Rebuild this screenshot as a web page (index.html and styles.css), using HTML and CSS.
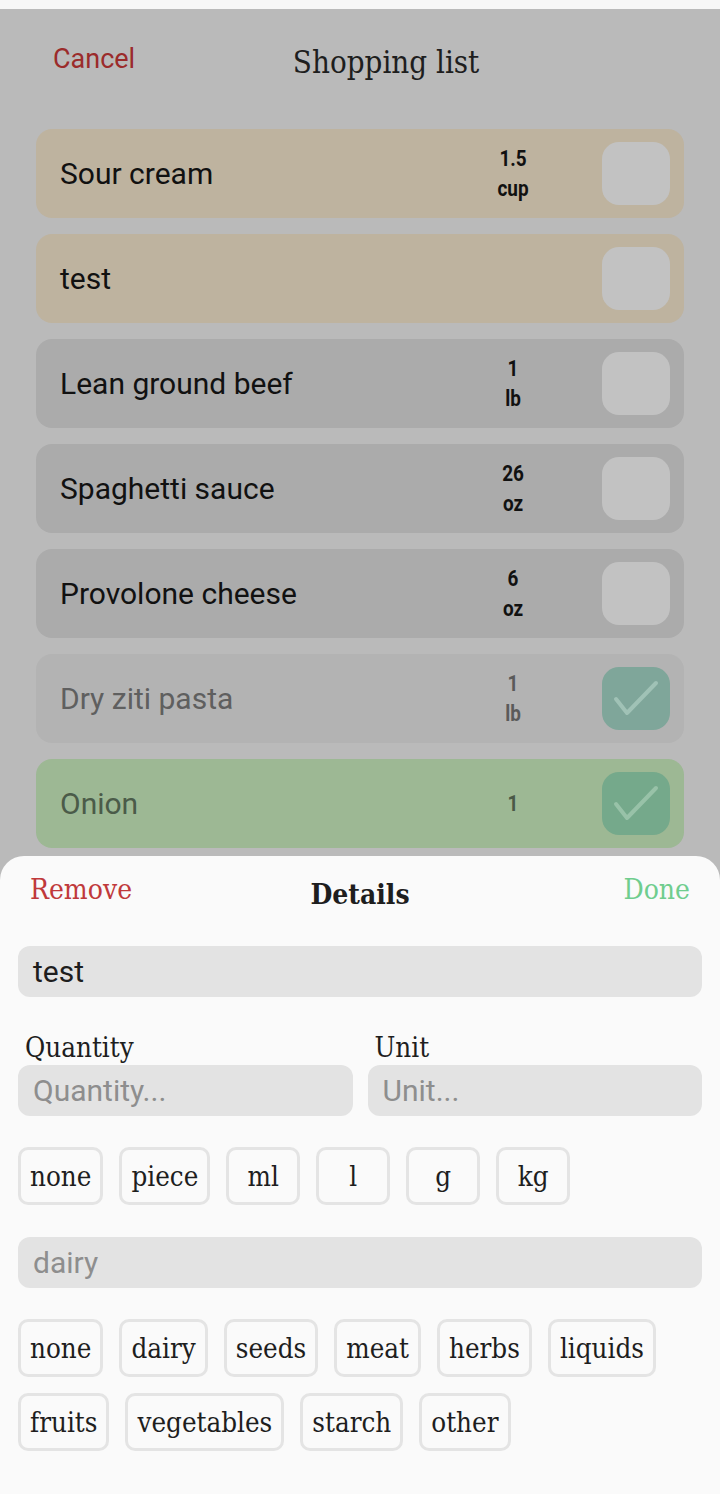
FILE: index.html
```html
<!DOCTYPE html>
<html lang="en">
<head>
<meta charset="utf-8">
<title>Shopping list</title>
<link rel="stylesheet" href="styles.css">
</head>
<body>
<div class="statusbar"></div>
<div class="screen">
  <header class="topbar">
    <span class="cancel">Cancel</span>
    <h1 class="title">Shopping list</h1>
  </header>
  <ul class="list">
    <li class="item item-beige">
      <span class="name">Sour cream</span>
      <span class="qty">1.5<br>cup</span>
      <span class="box"></span>
    </li>
    <li class="item item-beige">
      <span class="name">test</span>
      <span class="qty"></span>
      <span class="box"></span>
    </li>
    <li class="item item-gray">
      <span class="name">Lean ground beef</span>
      <span class="qty">1<br>lb</span>
      <span class="box"></span>
    </li>
    <li class="item item-gray">
      <span class="name">Spaghetti sauce</span>
      <span class="qty">26<br>oz</span>
      <span class="box"></span>
    </li>
    <li class="item item-gray">
      <span class="name">Provolone cheese</span>
      <span class="qty">6<br>oz</span>
      <span class="box"></span>
    </li>
    <li class="item item-done">
      <span class="name">Dry ziti pasta</span>
      <span class="qty">1<br>lb</span>
      <span class="box box-checked"><svg viewBox="0 0 68 63" class="check"><polyline points="14,32 25,46 54,16"/></svg></span>
    </li>
    <li class="item item-green">
      <span class="name">Onion</span>
      <span class="qty">1</span>
      <span class="box box-checked box-green"><svg viewBox="0 0 68 63" class="check"><polyline points="14,32 25,46 54,16"/></svg></span>
    </li>
  </ul>
</div>

<section class="sheet">
  <div class="sheet-head">
    <span class="remove">Remove</span>
    <h2 class="sheet-title">Details</h2>
    <span class="done">Done</span>
  </div>
  <div class="field field-name">test</div>
  <div class="pair">
    <div class="col">
      <div class="label">Quantity</div>
      <div class="field placeholder">Quantity...</div>
    </div>
    <div class="col">
      <div class="label">Unit</div>
      <div class="field placeholder">Unit...</div>
    </div>
  </div>
  <div class="chips chips-units">
    <span class="chip">none</span>
    <span class="chip">piece</span>
    <span class="chip">ml</span>
    <span class="chip">l</span>
    <span class="chip">g</span>
    <span class="chip">kg</span>
  </div>
  <div class="field placeholder field-cat">dairy</div>
  <div class="chips chips-cats">
    <span class="chip">none</span>
    <span class="chip">dairy</span>
    <span class="chip">seeds</span>
    <span class="chip">meat</span>
    <span class="chip">herbs</span>
    <span class="chip">liquids</span>
    <span class="chip">fruits</span>
    <span class="chip">vegetables</span>
    <span class="chip">starch</span>
    <span class="chip">other</span>
  </div>
</section>
</body>
</html>
```
FILE: styles.css
```css
* { box-sizing: border-box; }
html, body {
  margin: 0;
  padding: 0;
}
body {
  width: 720px;
  height: 1494px;
  background: #bababa;
  font-family: Roboto, "Liberation Sans", sans-serif;
  overflow: hidden;
  position: relative;
}
.statusbar {
  height: 9px;
  background: #f7f7f7;
}
.topbar {
  height: 120px;
  display: flex;
  align-items: flex-start;
  padding: 0 83px 0 53px;
}
.cancel {
  flex: none;
  margin-top: 35px;
  font-size: 27px;
  line-height: 30px;
  color: #9b2b2b;
}
.title {
  flex: 1;
  margin: 33px 0 0;
  text-align: center;
  font-family: "DejaVu Serif", "Liberation Serif", serif;
  font-stretch: condensed;
  font-weight: normal;
  font-size: 31px;
  line-height: 40px;
  color: #1e1e1e;
}
.list {
  list-style: none;
  margin: 0;
  padding: 0 36px;
  display: flex;
  flex-direction: column;
  gap: 16px;
}
.item {
  height: 89px;
  border-radius: 16px;
  display: flex;
  align-items: center;
  padding: 0 14px 0 24px;
}
.item-beige { background: #beb39f; }
.item-gray { background: #ababab; }
.item-done { background: #b3b3b3; }
.item-green { background: #9db894; }
.name {
  flex: 1;
  font-size: 30px;
  color: #111;
}
.item-done .name { color: #5f5f5f; }
.item-green .name { color: #4b5b49; }
.qty {
  flex: none;
  width: 60px;
  margin-right: 59px;
  text-align: center;
  font-weight: bold;
  font-size: 22px;
  line-height: 30px;
  color: #111;
  transform: scaleX(0.86);
}
.item-done .qty { color: #5a5a5a; }
.item-green .qty { color: #4a5947; }
.box {
  flex: none;
  width: 68px;
  height: 63px;
  border-radius: 17px;
  background: #c2c2c2;
  display: block;
}
.box-checked { background: #7fa69a; }
.box-green { background: #75a98b; }
.check {
  display: block;
  width: 68px;
  height: 63px;
}
.check polyline {
  fill: none;
  stroke: #a0c2b6;
  stroke-width: 4;
  stroke-linecap: round;
  stroke-linejoin: round;
}
.box-green .check polyline { stroke: #98c2a8; }

.sheet {
  position: absolute;
  left: 0;
  right: 0;
  top: 856px;
  bottom: 0;
  background: #fafafa;
  border-radius: 24px 24px 0 0;
  padding: 0 18px;
}
.sheet-head {
  display: grid;
  grid-template-columns: 1fr auto 1fr;
  align-items: start;
  padding: 0 12px;
  height: 90px;
}
.remove, .done {
  margin-top: 17px;
  font-family: "DejaVu Serif", "Liberation Serif", serif;
  font-stretch: condensed;
  font-size: 28px;
  line-height: 34px;
}
.remove { color: #c0393b; }
.done { color: #6fcd8e; justify-self: end; }
.sheet-title {
  margin: 19px 0 0;
  font-family: "DejaVu Serif", "Liberation Serif", serif;
  font-stretch: condensed;
  font-weight: bold;
  font-size: 28px;
  line-height: 40px;
  color: #1e1e1e;
}
.field {
  height: 51px;
  border-radius: 12px;
  background: #e3e3e3;
  padding: 0 15px;
  display: flex;
  align-items: center;
  font-size: 30px;
  color: #1e1e1e;
}
.placeholder { color: #8e8e8e; }
.pair {
  display: flex;
  gap: 15px;
  margin-top: 33px;
}
.col { flex: 1; }
.label {
  padding-left: 7px;
  font-family: "DejaVu Serif", "Liberation Serif", serif;
  font-stretch: condensed;
  font-size: 27.5px;
  line-height: 35px;
  color: #1e1e1e;
}
.chips {
  display: flex;
  flex-wrap: wrap;
  gap: 16px;
}
.chips-units { margin-top: 31px; }
.field-cat { margin-top: 32px; }
.chips-cats { margin-top: 31px; }
.chip {
  min-width: 74px;
  height: 58px;
  padding: 0 9px;
  border: 3px solid #e4e4e4;
  border-radius: 10px;
  display: flex;
  align-items: center;
  justify-content: center;
  font-family: "DejaVu Serif", "Liberation Serif", serif;
  font-stretch: condensed;
  font-size: 27.5px;
  color: #1e1e1e;
}
```
